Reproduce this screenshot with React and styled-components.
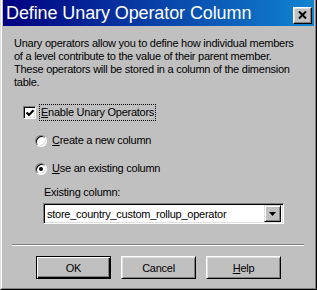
import React from 'react';
import styled, { createGlobalStyle } from 'styled-components';

const GlobalStyle = createGlobalStyle`
  html, body {
    margin: 0;
    padding: 0;
    background: #c0c0c0;
  }
  body {
    font-family: "Liberation Sans", Arial, sans-serif;
    font-size: 11px;
    letter-spacing: -0.25px;
    color: #000;
  }
`;

const Window = styled.div`
  width: 317px;
  height: 290px;
  box-sizing: border-box;
  background: #c0c0c0;
  border-left: 1px solid #dfdfdf;
  border-right: 1px solid #000;
  border-bottom: 1px solid #000;
`;

const Frame = styled.div`
  height: 100%;
  box-sizing: border-box;
  border-left: 1px solid #fff;
  border-right: 1px solid #808080;
  border-bottom: 1px solid #808080;
  padding: 0 1px 1px 1px;
  display: flex;
  flex-direction: column;
`;

const TitleBar = styled.div`
  height: 26px;
  flex: none;
  display: flex;
  align-items: center;
  justify-content: space-between;
  padding: 0 2px 0 3px;
  background: linear-gradient(to right, #000080, #1084d0);
`;

const Title = styled.span`
  color: #fff;
  font-size: 18px;
  letter-spacing: -0.1px;
  white-space: nowrap;
`;

const CloseButton = styled.div`
  width: 19px;
  height: 17px;
  box-sizing: border-box;
  margin-top: 4px;
  background: #c0c0c0;
  border: 1px solid;
  border-color: #fff #000 #000 #fff;
  box-shadow: inset -1px -1px #808080, inset 1px 1px #dfdfdf;
  display: flex;
  align-items: center;
  justify-content: center;
`;

const Body = styled.div`
  flex: 1;
  padding: 11px 0 0 11px;
  display: flex;
  flex-direction: column;
`;

const Description = styled.p`
  margin: 0;
  line-height: 13px;
  white-space: nowrap;
`;

const Row = styled.div`
  display: flex;
  align-items: center;
  height: 15px;
  margin-top: ${p => p.$top}px;
  margin-left: ${p => p.$indent}px;
`;

const CheckBox = styled.div`
  width: 13px;
  height: 13px;
  box-sizing: border-box;
  background: #fff;
  border: 1px solid;
  border-color: #808080 #fff #fff #808080;
  box-shadow: inset 1px 1px #000, inset -1px -1px #dfdfdf;
  display: flex;
  align-items: center;
  justify-content: center;
`;

const Radio = styled.div`
  width: 12px;
  height: 12px;
  box-sizing: border-box;
  border-radius: 50%;
  background: #fff;
  border: 1px solid;
  border-color: #808080 #fff #fff #808080;
  box-shadow: inset 1px 1px #000, inset -1px -1px #dfdfdf;
  display: flex;
  align-items: center;
  justify-content: center;

  &::after {
    content: "";
    display: ${p => (p.$checked ? 'block' : 'none')};
    width: 4px;
    height: 4px;
    border-radius: 50%;
    background: #000;
  }
`;

const Label = styled.span`
  margin-left: ${p => p.$gap}px;
  padding: 1px 1px;
  line-height: 13px;
  border: 1px ${p => (p.$focused ? 'dotted #000' : 'solid transparent')};
  white-space: nowrap;
`;

const Key = styled.u`
  text-decoration: underline;
`;

const FieldLabel = styled.div`
  margin: 10px 0 0 30px;
  line-height: 13px;
`;

const Combo = styled.div`
  margin: 4px 0 0 29px;
  width: 241px;
  height: 21px;
  box-sizing: border-box;
  background: #fff;
  border: 1px solid;
  border-color: #808080 #fff #fff #808080;
  box-shadow: inset 1px 1px #000, inset -1px -1px #dfdfdf;
  display: flex;
  align-items: center;
  padding: 2px 2px 2px 3px;
`;

const ComboText = styled.span`
  flex: 1;
  white-space: nowrap;
`;

const DropButton = styled.div`
  width: 17px;
  height: 17px;
  box-sizing: border-box;
  background: #c0c0c0;
  border: 1px solid;
  border-color: #dfdfdf #000 #000 #dfdfdf;
  box-shadow: inset 1px 1px #fff, inset -1px -1px #808080;
  display: flex;
  align-items: center;
  justify-content: center;
`;

const Separator = styled.div`
  margin: 20px 0 0 -2px;
  width: 292px;
  height: 1px;
  background: #808080;
  border-bottom: 1px solid #fff;
`;

const ButtonRow = styled.div`
  display: flex;
  gap: 10px;
  margin: 10px 0 0 22px;
`;

const Button = styled.div`
  width: 75px;
  height: 23px;
  box-sizing: border-box;
  display: flex;
  align-items: center;
  justify-content: center;
  background: #c0c0c0;
  border: 1px solid;
  border-color: ${p => (p.$default ? '#000' : '#fff #000 #000 #fff')};
  box-shadow: ${p =>
    p.$default
      ? 'inset 1px 1px #fff, inset -1px -1px #000, inset -2px -2px #808080'
      : 'inset 1px 1px #dfdfdf, inset -1px -1px #808080'};
`;

export default function App() {
  return (
    <>
      <GlobalStyle />
      <Window>
        <Frame>
          <TitleBar>
            <Title>Define Unary Operator Column</Title>
            <CloseButton>
              <svg width="9" height="8" viewBox="0 0 9 8">
                <path d="M1 0.5 L8 7.5 M8 0.5 L1 7.5" stroke="#000" strokeWidth="2" />
              </svg>
            </CloseButton>
          </TitleBar>
          <Body>
            <Description>
              Unary operators allow you to define how individual members
              <br />
              of a level contribute to the value of their parent member.
              <br />
              These operators will be stored in a column of the dimension
              <br />
              table.
            </Description>
            <Row $top={16} $indent={9}>
              <CheckBox>
                <svg width="8" height="8" viewBox="0 0 8 8">
                  <path d="M0.5 3.5 L3 6 L7.5 1.2" stroke="#000" strokeWidth="2.2" fill="none" />
                </svg>
              </CheckBox>
              <Label $gap={3} $focused>
                <Key>E</Key>nable Unary Operators
              </Label>
            </Row>
            <Row $top={13} $indent={21}>
              <Radio />
              <Label $gap={3}>
                <Key>C</Key>reate a new column
              </Label>
            </Row>
            <Row $top={13} $indent={21}>
              <Radio $checked />
              <Label $gap={3}>
                <Key>U</Key>se an existing column
              </Label>
            </Row>
            <FieldLabel>Existing column:</FieldLabel>
            <Combo>
              <ComboText>store_country_custom_rollup_operator</ComboText>
              <DropButton>
                <svg width="7" height="4" viewBox="0 0 7 4">
                  <path d="M0 0 H7 L3.5 4 Z" fill="#000" />
                </svg>
              </DropButton>
            </Combo>
            <Separator />
            <ButtonRow>
              <Button $default>OK</Button>
              <Button>Cancel</Button>
              <Button>
                <span>
                  <Key>H</Key>elp
                </span>
              </Button>
            </ButtonRow>
          </Body>
        </Frame>
      </Window>
    </>
  );
}
